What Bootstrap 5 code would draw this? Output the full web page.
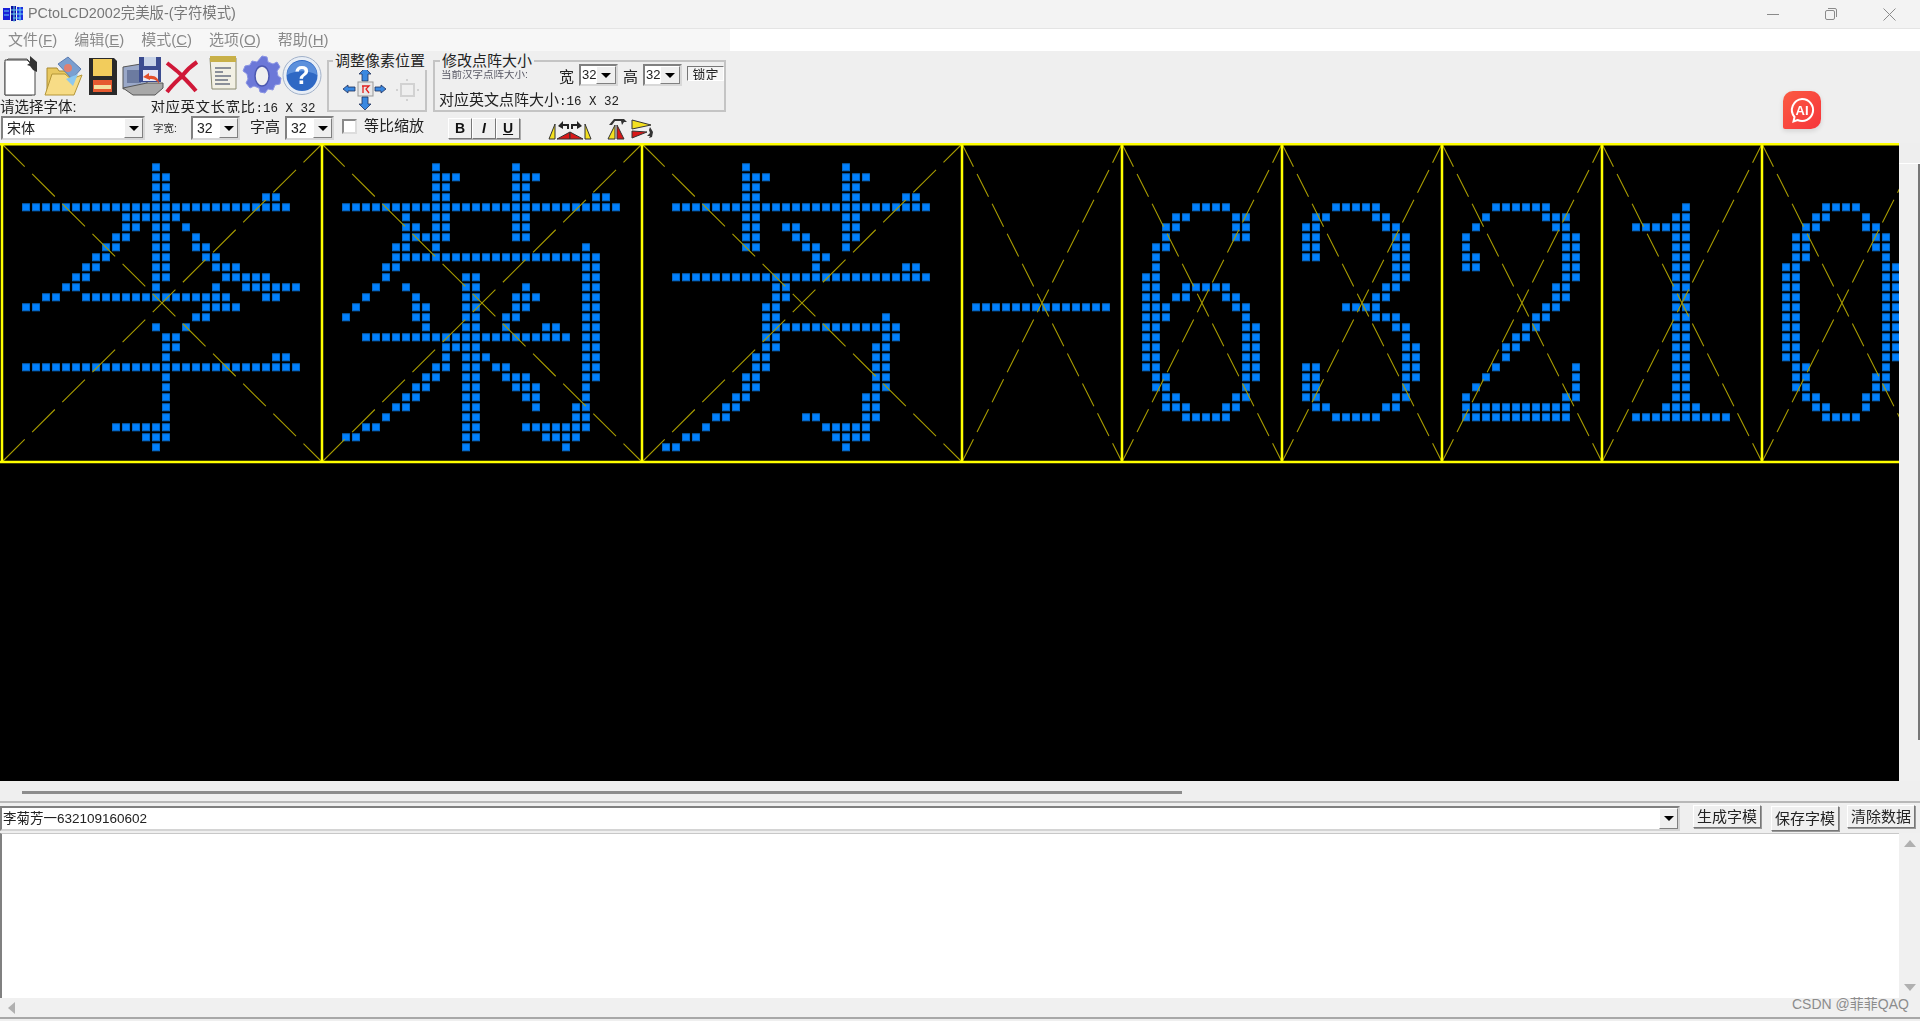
<!DOCTYPE html>
<html lang="zh-CN">
<head>
  <meta charset="UTF-8" />
  <title>PCtoLCD2002</title>
  <link href="https://cdn.jsdelivr.net/npm/bootstrap@5.3.0/dist/css/bootstrap.min.css" rel="stylesheet" />
  <style>
    body {
      background: #efefef;
      height: 1021px;
      overflow: hidden;
      font-family: "Liberation Sans", "Noto Sans CJK SC", sans-serif;
      color: #222;
    }

    .title-strip { height: 29px; background: #f3f3f3; border-bottom: 1px solid #e4e4e4; color: #777; font-size: 14.4px; }
    .title-label, .menu-strip span, .entry-line { filter: blur(.3px); }
    .win-btns { gap: 46px; padding-right: 24px; }
    .menu-strip { height: 22px; background: linear-gradient(90deg, #f7f7f7 730px, #fff 730px); color: #8a8a8a; font-size: 15px; padding-left: 8px; gap: 17px; }

    .tool-area { height: 92px; filter: blur(.3px); }
    .tool-top { height: 62px; }
    .tool-left { width: 327px; }
    .icon-line { height: 49px; padding: 4px 0 0 4px; }
    .label-line { height: 13px; font-size: 14.5px; line-height: 15px; }
    .ratio-text { display: inline-block; height: 13px; overflow: hidden; margin-left: 74px; letter-spacing: .5px; }
    .mono-text { font-family: "Liberation Mono", monospace; font-size: 12.5px; letter-spacing: 0; }

    .group-box { position: relative; border: 2px solid #c4c4c4; height: 52px; margin-top: 9px; }
    .group-a { width: 100px; }
    .group-b { width: 293px; margin-left: 6px; }
    .group-title { position: absolute; top: -10px; left: 4px; background: #efefef; padding: 0 2px; font-size: 15px; line-height: 18px; white-space: nowrap; }
    .group-b .group-title { left: 5px; }
    .small-tag { font-size: 10.5px; color: #5a5a66; line-height: 12px; }
    .num-text { font-size: 15px; line-height: 18px; white-space: nowrap; }

    .sunken-combo { display: flex; align-items: stretch; background: #fff; border: 2px solid; border-color: #808080 #d8d8d8 #d8d8d8 #808080; font-size: 14px; }
    .sunken-combo .val { flex: 1; padding-left: 4px; line-height: 20px; overflow: hidden; white-space: nowrap; }
    .combo-arrow { width: 19px; background: #efefef; border: 1px solid; border-color: #fff #808080 #808080 #fff; display: flex; align-items: center; justify-content: center; }
    .combo-arrow::after { content: ""; border: 5px solid transparent; border-top: 5px solid #000; border-bottom: 0; }
    .combo-font { width: 144px; height: 24px; margin: 3px 0 0 1px; }
    .combo-num { width: 49px; height: 24px; margin-top: 3px; }
    .combo-tiny { width: 39px; height: 22px; }
    .combo-tiny .val { padding-left: 1px; font-size: 13px; line-height: 18px; }
    .combo-tiny .combo-arrow { width: 20px; }

    .tool-bottom { height: 30px; font-size: 15px; }
    .tick-box { width: 15px; height: 15px; background: #fff; border: 2px solid; border-color: #8a8a8a #ddd #ddd #8a8a8a; }
    .style-btn { width: 24px; height: 21px; background: #efefef; border: 1px solid; border-color: #fff #777 #777 #fff; box-shadow: 1px 1px 0 #aaa; font: 700 14px/19px "Liberation Sans", sans-serif; text-align: center; color: #111; padding: 0; }
    .lock-btn { width: 37px; height: 15px; margin: 2px 0 0 5px; border: 1px solid; border-color: #777 #fff #fff #777; background: #f4f4f4; font-size: 13px; line-height: 15px; overflow: hidden; text-align: center; }

    .canvas-line { height: 638px; }
    .dot-canvas { width: 1899px; height: 638px; display: block; background: #000; }
    .side-bar { width: 21px; background: #f0f0f0; }
    .side-cap { height: 21px; border-bottom: 1px solid #fff; background: #eee; }
    .side-thumb { height: 576px; border-right: 2px solid #777; }
    .hscroll-gap { height: 22px; padding: 10px 0 0 22px; border-bottom: 2px solid #b8b8b8; }
    .hscroll-thumb { width: 1160px; height: 3px; background: #8c8c8c; }

    .entry-line { height: 30px; }
    .entry-box { width: 1680px; height: 25px; margin-top: 3px; background: #fff; border: 2px solid; border-color: #808080 #d4d4d4 #d4d4d4 #808080; font-size: 13.5px; line-height: 21px; padding-left: 1px; }
    .entry-box .entry-text { flex: 1; }
    .cmd-btn { width: 68px; height: 23px; background: #efefef; border: 1px solid; border-color: #fff #777 #777 #fff; box-shadow: 1px 1px 0 #999; font-size: 15px; line-height: 20px; padding: 0; color: #222; white-space: nowrap; }
    .text-line { height: 165px; }
    .text-pane { width: 1899px; background: #fff; border-left: 2px solid #808080; border-top: 1px solid #c8c8c8; }
    .bar-arrow { height: 21px; display: flex; align-items: center; justify-content: center; }
    .arrow-up::after { content: ""; border: 6px solid transparent; border-bottom: 7px solid #b0b0b0; border-top: 0; }
    .arrow-down::after { content: ""; border: 6px solid transparent; border-top: 7px solid #b0b0b0; border-bottom: 0; }
    .bottom-bar { height: 21px; background: #f0f0f0; border-bottom: 2px solid #a8a8a8; padding-left: 8px; }
    .arrow-left { width: 0; height: 0; border: 6px solid transparent; border-right: 7px solid #b0b0b0; border-left: 0; }

    .ai-badge { position: absolute; left: 1783px; top: 91px; width: 38px; height: 38px; border-radius: 10px 10px 10px 2px; background: linear-gradient(135deg, #fb5b42, #f6353b); box-shadow: 0 2px 5px rgba(0,0,0,.12); }
    .mark-text { position: absolute; left: 1792px; top: 995px; font-size: 14px; line-height: 18px; color: #8c8c8c; white-space: nowrap; }
  </style>
</head>
<body>
  <!-- Title bar -->
  <div class="title-strip d-flex align-items-center">
    <svg width="22" height="18" viewBox="0 0 22 18" style="margin: 0 4px 0 2px">
      <rect x="1" y="3" width="7" height="12" fill="#1820d8"/><rect x="9" y="1" width="5" height="15" fill="#1010a0"/><rect x="15" y="2" width="6" height="13" fill="#1c30e0"/>
      <path d="M2 6h5M2 10h5M9 5h12M9 9h12M11 13h8M12 1v16M18 2v14" stroke="#6ad0f0" stroke-width="1" fill="none"/>
    </svg>
    <span class="title-label flex-grow-1">PCtoLCD2002完美版-(字符模式)</span>
    <div class="d-flex align-items-center win-btns">
      <svg width="12" height="12" viewBox="0 0 12 12"><path d="M0 6.500h12" stroke="#8a8a8a"/></svg>
      <svg width="12" height="12" viewBox="0 0 12 12" fill="none" stroke="#8a8a8a"><rect x=".5" y="2.500" width="9" height="9" rx="1.500"/><path d="M3 .5h7a1.500 1.500 0 0 1 1.500 1.500v7"/></svg>
      <svg width="13" height="13" viewBox="0 0 13 13"><path d="M.5.5l12 12M12.500.5l-12 12" stroke="#8a8a8a"/></svg>
    </div>
  </div>

  <!-- Menu -->
  <div class="menu-strip d-flex align-items-center">
    <span>文件(<u>F</u>)</span><span>编辑(<u>E</u>)</span><span>模式(<u>C</u>)</span><span>选项(<u>O</u>)</span><span>帮助(<u>H</u>)</span>
  </div>

  <!-- Toolbar -->
  <div class="tool-area">
    <div class="tool-top d-flex">
      <div class="tool-left">
        <div class="icon-line d-flex">
          <!-- new -->
          <svg width="40" height="41" viewBox="0 0 40 41"><path d="M4 4h19l5 5v31H1V7z" fill="#ddd" stroke="#555"/><path d="M1 5h22l8 8v27H1z" fill="#fff" stroke="#444"/><path d="M26 1l7 6v10l-4-2-3-4-3-1 3-2z" fill="#333"/></svg>
          <!-- open -->
          <svg width="40" height="41" viewBox="0 0 40 41"><path d="M3 13h10l2 3h12v22H3z" fill="#e8c860" stroke="#a98a30"/><path d="M14 9l10-7 13 12-9 10z" fill="#7a9fd0" stroke="#5a7ab0"/><circle cx="24" cy="13" r="4" fill="#e08070"/><path d="M1 40l7-21h13l6 5 11-4-8 20z" fill="#f7dc86" stroke="#b49638"/><path d="M22 24l12-5-5 12z" fill="#8cc8f0"/></svg>
          <!-- save -->
          <svg width="30" height="41" viewBox="0 0 30 41" class="ms-1"><path d="M1 3h25l3 3v34H1z" fill="#2a2a2a"/><rect x="5" y="4" width="19" height="17" fill="#f2cc5c"/><rect x="5" y="25" width="19" height="12" fill="#e65a30"/><rect x="6" y="30" width="17" height="4" fill="#f4e0a0"/></svg>
          <!-- save as -->
          <svg width="42" height="41" viewBox="0 0 42 41" class="ms-1"><path d="M1 12l24-4v22L1 34z" fill="#9aa8c8" stroke="#555"/><rect x="5" y="15" width="14" height="13" fill="#6c7ba0"/><path d="M1 33l10 7h22l8-7V28H25z" fill="#a8a8a8" stroke="#555"/><path d="M17 2h22v25H17z" fill="#3b4c90"/><rect x="22" y="2" width="12" height="9" fill="#c8d4e8"/><rect x="21" y="15" width="15" height="11" fill="#e8e8f4"/><path d="M28 25l-7-3 6-4v3c6-1 10 2 10 8-2-4-5-5-9-5z" fill="#e4502c"/></svg>
          <!-- delete -->
          <svg width="35" height="35" viewBox="0 0 35 35" class="mt-1"><path d="M3 4c9 7 14 11 15 13 4-5 9-10 15-14M3 33c5-7 11-12 15-16 4 4 9 9 14 15" fill="none" stroke="#d01838" stroke-width="4"/></svg>
          <!-- notes -->
          <svg width="30" height="38" viewBox="0 0 30 38" style="margin-left:9px"><path d="M2 3h26v31H4z" fill="#f2f0e4" stroke="#8a8a70"/><rect x="2" y="1" width="26" height="6" fill="#c8b048"/><path d="M7 13h16M7 17h8M7 21h16M7 25h13M7 29h15" stroke="#6a7080" stroke-width="1.500"/></svg>
          <!-- gear -->
          <svg width="40" height="41" viewBox="0 0 40 41" class="ms-1"><path d="M20 1l5 1 1 5 5 2 4-2 3 5-3 4 1 5 3 2-1 6-5 1-2 5-5-1-3 4-5-1-1-4-5-2-4 2-4-5 2-4-1-5-4-3 2-5 5-1 2-4 5 1z" fill="#6c78d8" stroke="#8a94e4"/><ellipse cx="20" cy="21" rx="7" ry="10" fill="#efefef" stroke="#4c58b0" stroke-width="1.500"/></svg>
          <!-- help -->
          <svg width="40" height="41" viewBox="0 0 40 41"><circle cx="20" cy="20.500" r="19" fill="#e8eef6" stroke="#a0b0c8"/><circle cx="20" cy="20.500" r="15.500" fill="#2e68c4"/><path d="M5 20a15 14 0 0 1 30 0c-8-5-22-5-30 0z" fill="#5c90dc"/><text x="20" y="29" text-anchor="middle" font-family="Liberation Sans" font-weight="700" font-size="25" fill="#fff">?</text></svg>
        </div>
        <div class="label-line d-flex">
          <span>请选择字体:</span>
          <span class="ratio-text">对应英文长宽比<span class="mono-text">:16 X 32</span></span>
        </div>
      </div>

      <div class="group-box group-a">
        <span class="group-title">调整像素位置</span>
        <svg width="96" height="50" viewBox="0 0 96 50" class="d-block overflow-visible">
          <path d="M36 6l6 6h-3v7h-6v-7h-3z" fill="#3a88e0" stroke="#20305c" stroke-width=".8"/>
          <path d="M14 27l5-4v2h7v4h-7v2z" fill="#3a88e0" stroke="#20305c" stroke-width=".8"/>
          <rect x="29" y="20" width="15" height="14" fill="#e8e8e8" stroke="#999"/><path d="M33 24h7l-3 3 3 4M34 24v7" stroke="#e02020" stroke-width="1.300" fill="none"/>
          <path d="M46 25h6v-2l5 4-5 4v-2h-6z" fill="#3a88e0" stroke="#20305c" stroke-width=".8"/>
          <path d="M33 35h6v7h3l-6 6-6-6h3z" fill="#3a88e0" stroke="#20305c" stroke-width=".8"/>
          <rect x="72" y="22" width="13" height="12" fill="none" stroke="#d2d2d2" stroke-width="2"/>
          <path d="M69 28h-2M88 28h2M78 19v-2M78 37v2" stroke="#c8c8c8" stroke-width="1.500"/>
        </svg>
      </div>

      <div class="group-box group-b">
        <span class="group-title">修改点阵大小</span>
        <div class="d-flex" style="padding: 2px 0 0 6px; height: 26px;">
          <span class="small-tag pt-1" style="width:118px">当前汉字点阵大小:</span>
          <span class="num-text pt-1" style="width:20px">宽</span>
          <div class="sunken-combo combo-tiny"><span class="val">32</span><span class="combo-arrow"></span></div>
          <span class="num-text pt-1" style="width:20px;margin-left:5px">高</span>
          <div class="sunken-combo combo-tiny"><span class="val">32</span><span class="combo-arrow"></span></div>
          <div class="lock-btn">锁定</div>
        </div>
        <div class="num-text" style="padding: 3px 0 0 4px;">对应英文点阵大小<span class="mono-text">:16 X 32</span></div>
      </div>
    </div>

    <div class="tool-bottom d-flex">
      <div class="sunken-combo combo-font"><span class="val">宋体</span><span class="combo-arrow"></span></div>
      <span class="small-tag" style="margin:9px 0 0 8px;width:38px;color:#333">字宽:</span>
      <div class="sunken-combo combo-num"><span class="val">32</span><span class="combo-arrow"></span></div>
      <span class="num-text" style="margin:5px 5px 0 10px">字高</span>
      <div class="sunken-combo combo-num"><span class="val">32</span><span class="combo-arrow"></span></div>
      <div class="tick-box" style="margin:6px 7px 0 8px"></div>
      <span class="num-text" style="margin-top:4px;font-size:15px">等比缩放</span>
      <div class="d-flex" style="margin:5px 0 0 24px">
        <button class="style-btn">B</button><button class="style-btn fst-italic">I</button><button class="style-btn text-decoration-underline">U</button>
      </div>
      <svg width="110" height="24" viewBox="0 0 110 24" style="margin:4px 0 0 28px">
        <path d="M1 22L7 7v15z" fill="#f4e020" stroke="#333"/><path d="M9 22l13-7v7z" fill="#d81818" stroke="#333"/><path d="M10 9l5-5v3h6v5h-2V9h-4v3z" fill="#222"/>
        <path d="M43 22L37 7v15z" fill="#f4e020" stroke="#333"/><path d="M35 22l-13-7v7z" fill="#d81818" stroke="#333"/><path d="M34 9l-5-5v3h-6v5h2V9h4v3z" fill="#222"/>
        <path d="M60 22l7-14v14z" fill="#f4e020" stroke="#333"/><path d="M69 22V8l7 14z" fill="#d81818" stroke="#333"/><path d="M61 8l5-6h10l3 3h-3l-2 3-1-4h-6l-3 4z" fill="#333"/>
        <path d="M84 3l19 5-19 4z" fill="#f4e020" stroke="#333"/><path d="M84 14l15 1-15 6z" fill="#d81818" stroke="#333"/><path d="M102 10l3 5-1 5-3 1 1-2h-3l3-3-1-3z" fill="#333"/>
      </svg>
    </div>
  </div>

  <!-- Dot matrix preview -->
  <div class="canvas-line d-flex">
    <svg id="dotCanvas" class="dot-canvas" viewBox="0 0 1899 638"></svg>
    <div class="side-bar">
      <div class="side-cap"></div>
      <div class="side-thumb"></div>
    </div>
  </div>
  <div class="hscroll-gap"><div class="hscroll-thumb"></div></div>

  <!-- Input line -->
  <div class="entry-line d-flex">
    <div class="entry-box sunken-combo">
      <span class="entry-text">李菊芳一632109160602</span><span class="combo-arrow"></span>
    </div>
    <button class="cmd-btn" style="margin:2px 0 0 13px">生成字模</button>
    <button class="cmd-btn" style="margin:3px 0 0 10px;height:25px">保存字模</button>
    <button class="cmd-btn" style="margin:2px 0 0 8px">清除数据</button>
  </div>

  <!-- Output -->
  <div class="text-line d-flex">
    <div class="text-pane"></div>
    <div class="side-bar d-flex flex-column justify-content-between">
      <div class="bar-arrow arrow-up"></div>
      <div class="bar-arrow arrow-down"></div>
    </div>
  </div>
  <div class="bottom-bar d-flex align-items-center"><span class="arrow-left"></span></div>

  <div class="ai-badge">
    <svg width="38" height="38" viewBox="0 0 38 38">
      <path d="M19 8a11 11 0 1 1-4.500 21l-4 1.500 1-4.500A11 11 0 0 1 19 8z" fill="none" stroke="#fff" stroke-width="2"/>
      <text x="19" y="24" text-anchor="middle" font-family="Liberation Sans" font-weight="700" font-size="13" fill="#fff">AI</text>
    </svg>
  </div>
  <div class="mark-text">CSDN @菲菲QAQ</div>

  <script src="https://cdn.jsdelivr.net/npm/bootstrap@5.3.0/dist/js/bootstrap.bundle.min.js"></script>
  <script>
    // one entry per row, starting at row 2. "a-b" is a run of columns
    const cjk = {
      li: ["15","15-16","15-16","15-16,26-27","2-28","12-17","12-13,15-16,18","11-12,15-16,19","10-11,15-16,19-20","9-10,15-16,20-21","8-9,15-16,21-23","7-8,15-16,22-26","6-7,15,21,24-29","4-5,8-22,26-27","2-3,20-23","19-20","15,18","16-17","16-17","16,27-28","2-29","16","16","16","16","16","11-16","14-16","15"],
      ju: ["11,19","11-13,19-21","11-12,19-20","11-12,19-20,27-28","2-29","8,11-12,19-20","8-9,11-12,19-20","8-12,19-20","7-8,11,26","7-27","6-7,26-27","6,14-15,26-27","5,8,14-15,20,26-27","4,9,14-15,19-21,26-27","3,9-10,14-15,19-20,26-27","2,9-10,14-15,18-19,26-27","10,14-15,18,22-23,26-27","4-24,26-27","12-15,26-27","12,14-16,26-27","11-12,14-15,17-18,26-27","10-11,14-15,18-20,26-27","9-10,14-15,19-21,26","8-9,14-15,20-21,26","7-8,14-15,21,25-26","6,14-15,25-26","4-5,14-15,20-26","2-3,14-15,22-25","14,24"],
      fang: ["10,20","10-12,20-22","10-11,20-21","10-11,20-21,26-27","3-28","10-11,20-21","10-11,14-15,20-21","10-11,15-16,20-21","10-11,16-17,20","17-18","17,26-27","3-28","13-14","13-14","12-13","12-13,24","12-25","12-13,24-25","12-13,23-24","11-12,23-24","11-12,23-24","10-11,23-24","10-11,23-24","9-10,22-23","8-9,22-23","7-8,16-17,22-23","6,18-22","4-5,19-22","2-3,20"]
    };
    const wide = [
      { base: 0, rows: cjk.li },
      { base: 320, rows: cjk.ju },
      { base: 640, rows: cjk.fang }
    ];
    const sides = "2-3,12-13";
    const narrow = [
      { base: 960, rows: { 16: "1-14" } },
      { base: 1120, rows: { 6:"7-10",7:"5-6,11-12",8:"4-5,11-12",9:"4,11-12",10:"3-4",11:"3",12:"3",13:"2-3",14:"2-3,6-10",15:"2-3,5-6,10-11",16:"2-4,11-12",17:"2-4,12",18:"2-3,12-13",19:"2-3,12-13",20:"2-3,12-13",21:"2-3,12-13",22:"2-3,12-13",23:"3-4,12-13",24:"3-4,12",25:"4-5,11-12",26:"4-6,10-11",27:"6-10" } },
      { base: 1280, rows: { 6:"5-9",7:"3-4,9-10",8:"2-3,10-11",9:"2-3,11-12",10:"2-3,11-12",11:"2-3,11-12",12:"11-12",13:"11-12",14:"10-11",15:"9-10",16:"6-9",17:"9-11",18:"11-12",19:"12",20:"12-13",21:"12-13",22:"2-3,12-13",23:"2-3,12-13",24:"2-3,12",25:"2-3,11-12",26:"3-4,10-11",27:"5-9" } },
      { base: 1440, rows: { 6:"5-10",7:"4,10-12",8:"3,11-12",9:"2,12-13",10:"2,12-13",11:"2-3,12-13",12:"2-3,12-13",13:"12-13",14:"11-12",15:"11-12",16:"10-11",17:"9-10",18:"8-9",19:"7-8",20:"6-7",21:"6",22:"5,13",23:"4,13",24:"3,13",25:"2,12-13",26:"2-12",27:"2-12" } },
      { base: 1600, rows: { 6:"8",7:"7-8",8:"3-8",9:"7-8",10:"7-8",11:"7-8",12:"7-8",13:"7-8",14:"7-8",15:"7-8",16:"7-8",17:"7-8",18:"7-8",19:"7-8",20:"7-8",21:"7-8",22:"7-8",23:"7-8",24:"7-8",25:"7-8",26:"6-9",27:"3-12" } },
      { base: 1760, rows: { 6:"6-9",7:"5-6,10",8:"4-5,10-11",9:"3-4,11-12",10:"3-4,11-12",11:"3-4,12",12:sides,13:sides,14:sides,15:sides,16:sides,17:sides,18:sides,19:sides,20:sides,21:sides,22:"3-4,12",23:"3-4,11-12",24:"3-4,11-12",25:"4-5,10-11",26:"5-6,10",27:"6-9" } }
    ];

    let out = "";
    const gridTop = 1, gridBottom = 319;

    function addRow(base, r, spec) {
      spec.split(",").forEach(part => {
        const [a, b] = part.split("-").map(Number);
        for (let c = a; c <= (b === undefined ? a : b); c++) {
          out += `<rect x="${base + 2.5 + 10 * c}" y="${r * 10 + .8}" width="7" height="7" fill="#0080ff" stroke="#0768c4"/>`;
        }
      });
    }

    wide.forEach(g => g.rows.forEach((spec, i) => addRow(g.base, i + 2, spec)));
    narrow.forEach(g => Object.keys(g.rows).forEach(r => addRow(g.base, Number(r), g.rows[r])));

    // diagonals for each cell
    const cells = [[0,320,"32 10.500"],[320,320,"32 10.500"],[640,320,"32 10.500"],[960,160,"25.500 8"],[1120,160,"25.500 8"],[1280,160,"25.500 8"],[1440,160,"25.500 8"],[1600,160,"25.500 8"],[1760,160,"25.500 8"]];
    cells.forEach(([x, w, dash]) => {
      const l = x + 2, r = x + w + 2;
      out += `<path d="M${l} ${gridTop}L${r} ${gridBottom}M${l} ${gridBottom}L${r} ${gridTop}" stroke="#a89c00" stroke-width="1.100" stroke-dasharray="${dash}" fill="none"/>`;
      out += `<path d="M${l} 0V${gridBottom + 1}" stroke="#ffff00" stroke-width="2.500"/>`;
    });
    out += `<path d="M0 1.200H1899M0 319H1899" stroke="#ffff00" stroke-width="2.500"/>`;
    document.getElementById("dotCanvas").innerHTML = out;
  </script>
</body>
</html>
